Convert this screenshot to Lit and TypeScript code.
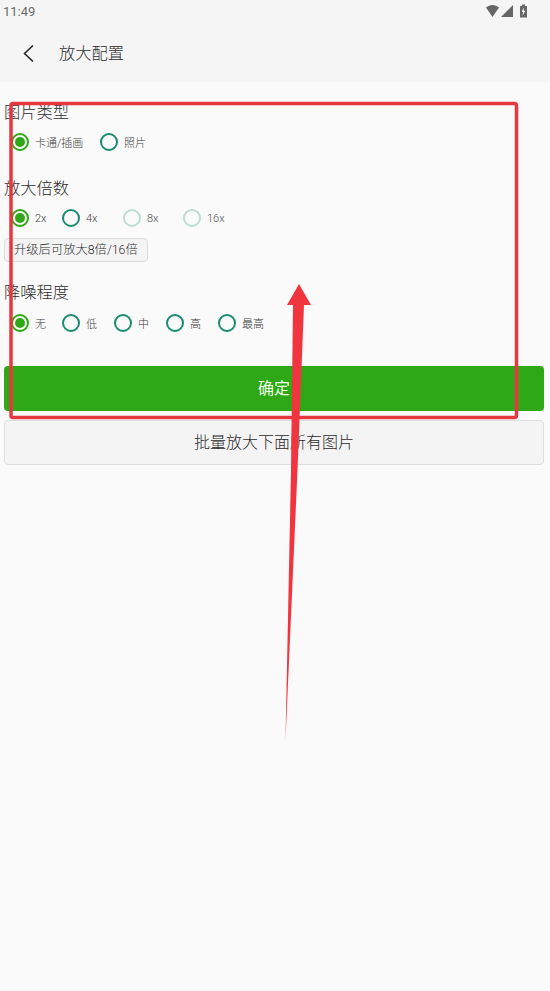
import { LitElement, html, css, svg } from "lit";
import { customElement } from "lit/decorators.js";

type Opt = { label: string; state: "on" | "off" | "dis"; width: number };

const types: Opt[] = [
  { label: "卡通/插画", state: "on", width: 89 },
  { label: "照片", state: "off", width: 60 },
];
const scales: Opt[] = [
  { label: "2x", state: "on", width: 51 },
  { label: "4x", state: "off", width: 61 },
  { label: "8x", state: "dis", width: 60 },
  { label: "16x", state: "dis", width: 60 },
];
const noise: Opt[] = [
  { label: "无", state: "on", width: 51 },
  { label: "低", state: "off", width: 52 },
  { label: "中", state: "off", width: 52 },
  { label: "高", state: "off", width: 52 },
  { label: "最高", state: "off", width: 60 },
];

@customElement("app-root")
export class AppRoot extends LitElement {
  static styles = css`
    :host {
      display: block;
      width: 550px;
      height: 991px;
      position: relative;
      overflow: hidden;
      background: #fafafa;
      font-family: "Roboto", "Noto Sans CJK SC", sans-serif;
      color: #333;
    }
    .top { background: #f5f5f5; height: 82px; display: flex; flex-direction: column; }
    .status {
      height: 22px;
      display: flex;
      align-items: center;
      justify-content: space-between;
      padding: 0 23px 0 3px;
      font-size: 13px;
      color: #6a6a6a;
    }
    .status svg { display: block; }
    .bar { height: 60px; display: flex; align-items: center; padding-bottom: 1px; box-sizing: border-box; }
    .back { width: 59px; padding: 3px 0 0 23px; box-sizing: border-box; }
    .back svg { display: block; }
    .title { font-size: 16.3px; color: #2e2e2e; font-weight: 300; }
    .content { padding: 20px 6px 0 4px; display: flex; flex-direction: column; }
    .head { font-size: 16.3px; line-height: 22px; color: #2e2e2e; font-weight: 300; }
    .group { display: flex; padding-left: 7px; height: 28px; margin-top: 4px; align-items: center; }
    .opt { display: flex; align-items: center; font-size: 11px; color: #3a3a3a; font-weight: 300; }
    .radio {
      width: 18px;
      height: 18px;
      box-sizing: border-box;
      border-radius: 50%;
      border: 2px solid #1a8a70;
      margin-right: 6px;
      display: flex;
      align-items: center;
      justify-content: center;
      flex: none;
    }
    .radio.on { border-color: #2ea816; }
    .radio.on::after { content: ""; width: 10px; height: 10px; border-radius: 50%; background: #2ea816; }
    .radio.dis { border-color: #bcdcd4; }
    .opt.dis { color: #505050; }
    .s2 { margin-top: 22px; }
    .s3 { margin-top: 20px; }
    .g3 { margin-top: 5px; }
    .upgrade {
      align-self: flex-start;
      margin-top: 6px;
      height: 24px;
      padding: 0 9px;
      box-sizing: border-box;
      border: 1px solid #dcdcdc;
      border-radius: 4px;
      background: #f4f4f4;
      font-size: 12.3px;
      line-height: 22px;
      color: #2e2e2e;
      font-weight: 300;
    }
    .btn {
      height: 45px;
      border-radius: 4px;
      display: flex;
      align-items: center;
      justify-content: center;
      font-size: 16px;
      box-sizing: border-box;
      padding-bottom: 4px;
      font-weight: 300;
    }
    .primary { background: #2ea816; color: #eefbe8; margin-top: 29px; font-weight: 400; }
    .secondary { background: #f4f4f4; border: 1px solid #dedede; color: #2a2a2a; margin-top: 9px; }
    .overlay { position: absolute; left: 0; top: 0; pointer-events: none; }
  `;

  private group(opts: Opt[], cls = "") {
    return html`<div class="group ${cls}">
      ${opts.map(
        (o) => html`<div class="opt ${o.state}" style="width:${o.width}px">
          <span class="radio ${o.state}"></span><span>${o.label}</span>
        </div>`
      )}
    </div>`;
  }

  render() {
    return html`
      <div class="top">
        <div class="status">
          <span>11:49</span>
          <svg width="41" height="14" viewBox="0 0 41 14" fill="#666">
            <path d="M0 3.500 C4 0 9 0 13 3.500 L6.500 13 Z" />
            <path d="M15 13 L27 1 V13 Z" />
            <path d="M34 2 h2 v-1.500 h3 v1.500 h2 v11.500 h-7 Z M37.500 3.500 L35.800 8 h1.300 L36.500 12 L39.200 6.800 h-1.400 Z" fill-rule="evenodd" />
          </svg>
        </div>
        <div class="bar">
          <div class="back">
            <svg width="11" height="17" viewBox="0 0 11 17" fill="none" stroke="#222" stroke-width="1.500">
              <path d="M10 0.500 L1.500 8.500 L10 16.500" />
            </svg>
          </div>
          <span class="title">放大配置</span>
        </div>
      </div>
      <div class="content">
        <div class="head">图片类型</div>
        ${this.group(types)}
        <div class="head s2">放大倍数</div>
        ${this.group(scales)}
        <div class="upgrade">升级后可放大8倍/16倍</div>
        <div class="head s3">降噪程度</div>
        ${this.group(noise, "g3")}
        <div class="btn primary">确定</div>
        <div class="btn secondary">批量放大下面所有图片</div>
      </div>
      <svg class="overlay" width="550" height="991" viewBox="0 0 550 991">
        ${svg`<rect x="11" y="103.500" width="505.500" height="314" rx="2" fill="none" stroke="#e8383f" stroke-width="3.500" />
        <path d="M299 284 L311 305 L304 305 L297.500 470 L285.500 740 L291 470 L293 305 L287 305 Z" fill="#f0353f" />`}
      </svg>
    `;
  }
}
